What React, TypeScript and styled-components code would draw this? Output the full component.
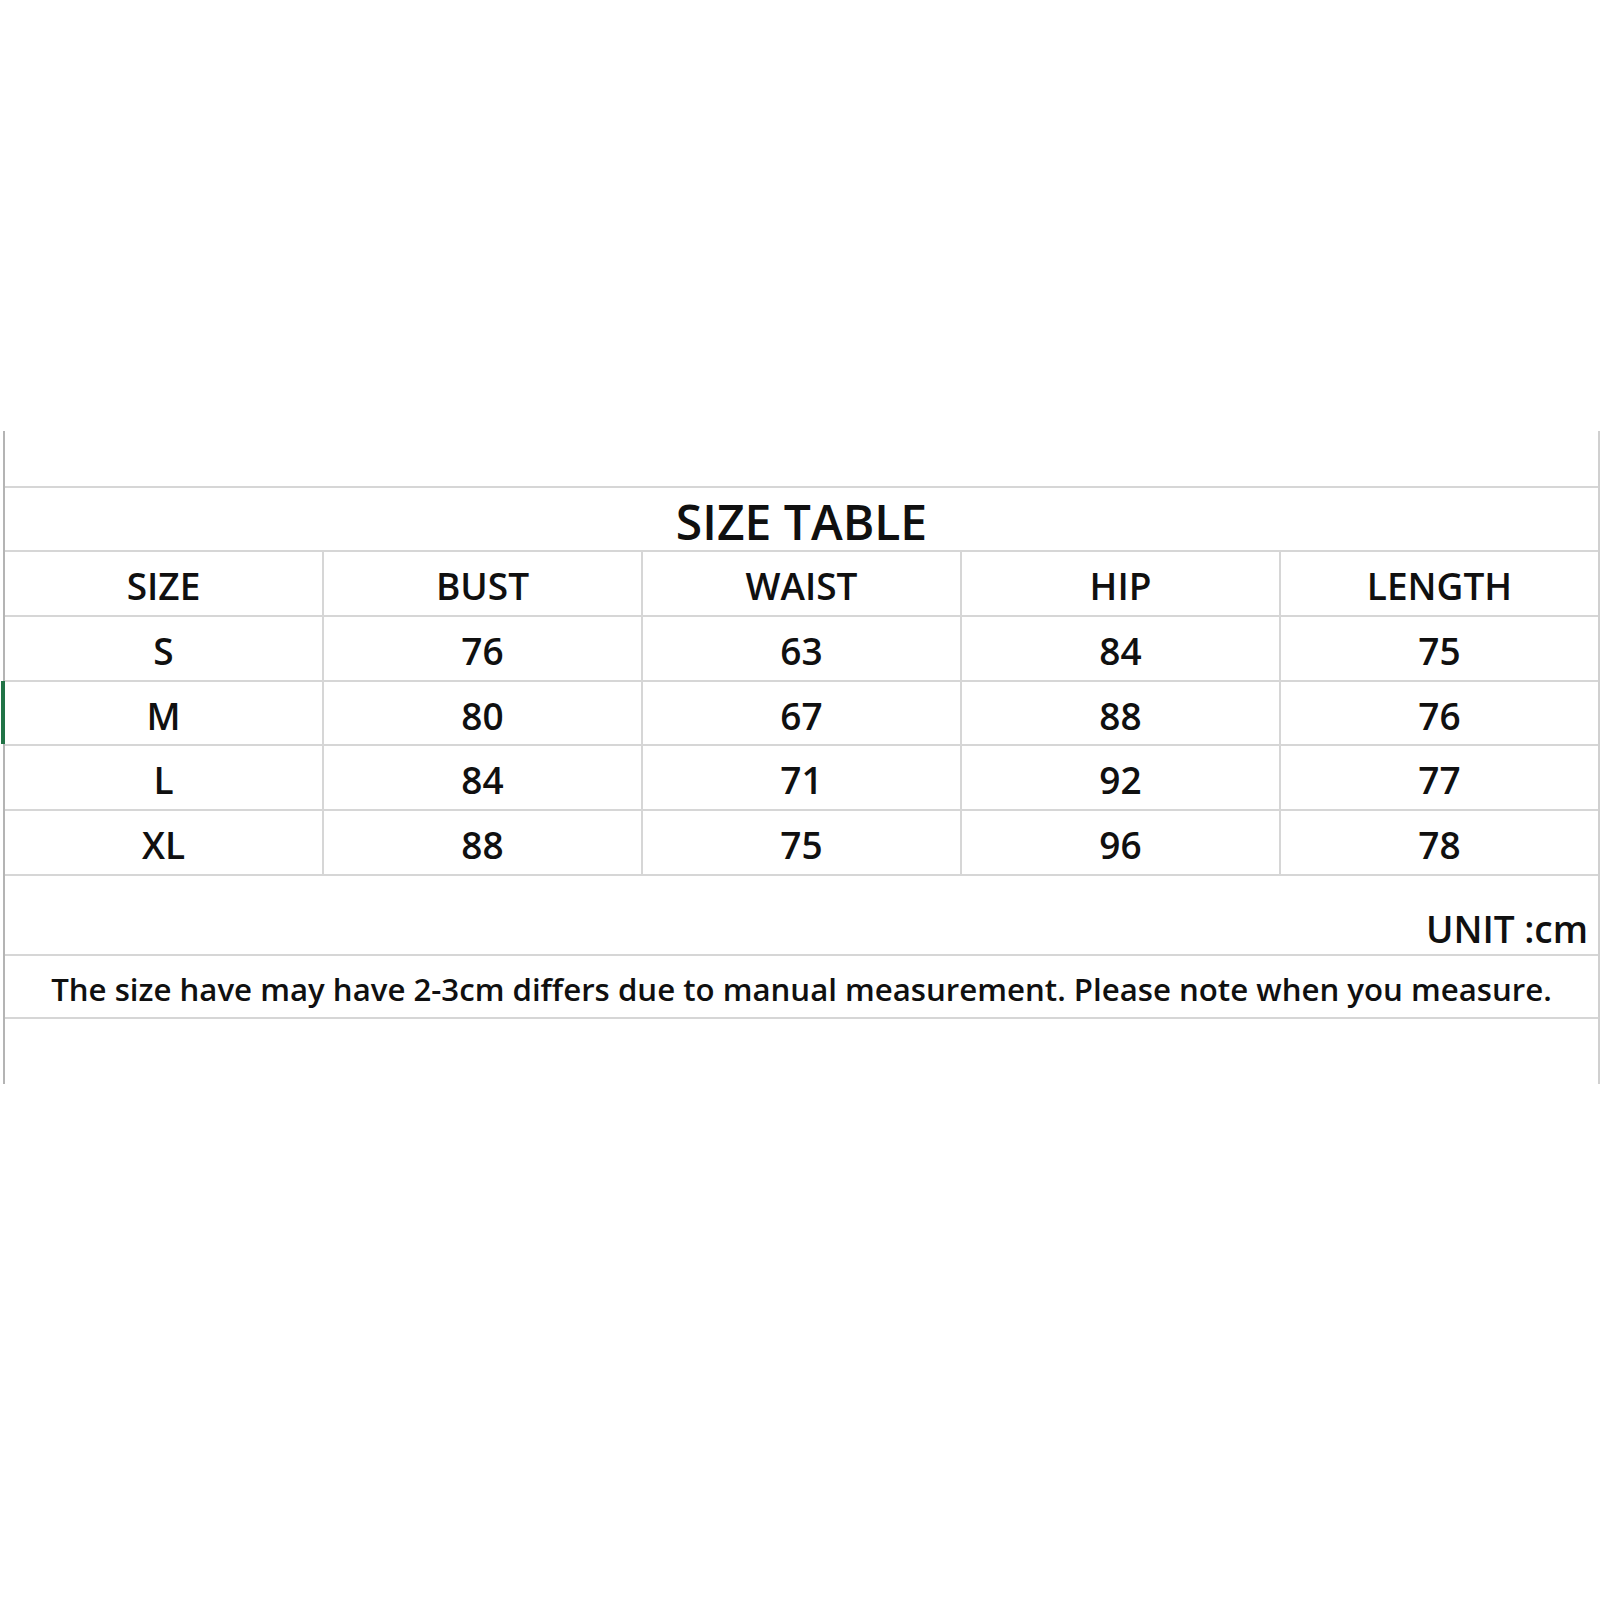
import React from "react";
import styled, { createGlobalStyle } from "styled-components";

const Global = createGlobalStyle`
  html, body { margin: 0; padding: 0; background: #ffffff; }
  body { font-family: "Open Sans", "Noto Sans", sans-serif; color: #111; }
`;

const Page = styled.div`
  width: 1600px;
  height: 1600px;
  padding-top: 431px;
  box-sizing: border-box;
  background: #fff;
`;

const Sheet = styled.div`
  margin-left: 3px;
  width: 1597px;
  box-sizing: border-box;
  border-left: 2px solid #b4b4b4;
  border-right: 2px solid #d0d0d0;
  display: flex;
  flex-direction: column;
`;

const Row = styled.div<{ $h: number; $line?: boolean; $mark?: boolean }>`
  height: ${(p) => p.$h}px;
  box-sizing: border-box;
  border-bottom: ${(p) => (p.$line === false ? "none" : "2px solid #d6d6d6")};
  position: relative;
  ${(p) =>
    p.$mark
      ? `&::before { content: ""; position: absolute; left: -4px; top: -1px; bottom: 0; width: 4px; background: #217346; }`
      : ""}
`;

const GridRow = styled(Row)`
  display: grid;
  grid-template-columns: 319px 319px 319px 319px 1fr;
`;

const Cell = styled.div`
  display: flex;
  align-items: center;
  justify-content: center;
  padding-top: 4px;
  border-right: 2px solid #d6d6d6;
  font-family: "Open Sans", "Noto Sans", sans-serif;
  font-weight: 600;
  font-size: 37px;
  color: #101010;
  &:last-child { border-right: none; }
`;

const Title = styled.div`
  display: flex;
  align-items: center;
  justify-content: center;
  height: 100%;
  padding-top: 4px;
  box-sizing: border-box;
  font-family: "Open Sans", "Noto Sans", sans-serif;
  font-weight: 600;
  font-size: 48px;
  color: #101010;
`;

const Unit = styled.div`
  display: flex;
  align-items: flex-end;
  justify-content: flex-end;
  height: 100%;
  box-sizing: border-box;
  padding: 0 10px 0 0;
  font-family: "Open Sans", "Noto Sans", sans-serif;
  font-weight: 600;
  font-size: 37px;
  color: #101010;
`;

const Note = styled.div`
  display: flex;
  align-items: center;
  justify-content: center;
  height: 100%;
  box-sizing: border-box;
  padding-top: 4px;
  font-family: "Open Sans", "Noto Sans", sans-serif;
  font-weight: 600;
  font-size: 31.2px;
  color: #101010;
  white-space: nowrap;
`;

const headers = ["SIZE", "BUST", "WAIST", "HIP", "LENGTH"];
const rows = [
  ["S", "76", "63", "84", "75"],
  ["M", "80", "67", "88", "76"],
  ["L", "84", "71", "92", "77"],
  ["XL", "88", "75", "96", "78"],
];
const rowHeights = [65, 64, 65, 65];

export default function App() {
  return (
    <Page>
      <Global />
      <Sheet>
        <Row $h={57} />
        <Row $h={64}>
          <Title>SIZE TABLE</Title>
        </Row>
        <GridRow $h={65}>
          {headers.map((h) => (
            <Cell key={h}>{h}</Cell>
          ))}
        </GridRow>
        {rows.map((r, i) => (
          <GridRow key={r[0]} $h={rowHeights[i]} $mark={r[0] === "M"}>
            {r.map((v, j) => (
              <Cell key={j}>{v}</Cell>
            ))}
          </GridRow>
        ))}
        <Row $h={80}>
          <Unit>UNIT :cm</Unit>
        </Row>
        <Row $h={63}>
          <Note>
            The size have may have 2-3cm differs due to manual measurement. Please note when you measure.
          </Note>
        </Row>
        <Row $h={65} $line={false} />
      </Sheet>
    </Page>
  );
}
